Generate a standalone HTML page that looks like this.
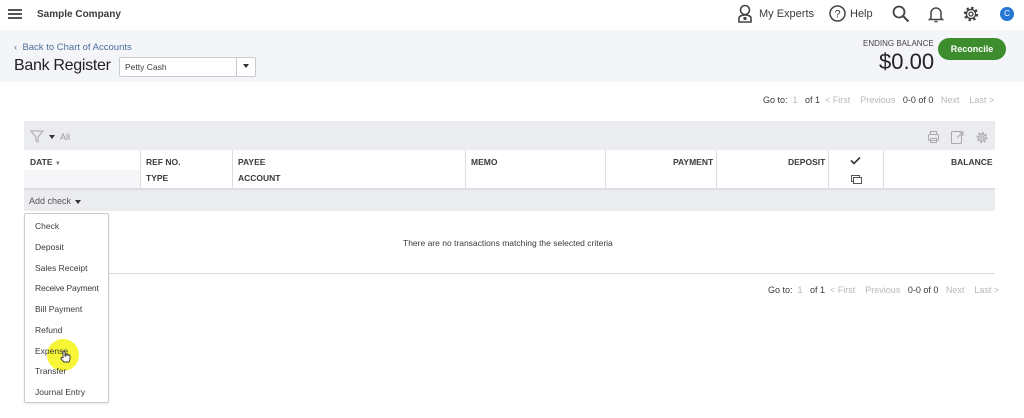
<!DOCTYPE html>
<html><head><meta charset="utf-8"><style>
*{margin:0;padding:0;box-sizing:border-box}
body{width:1024px;height:418px;background:#fff;font-family:"Liberation Sans",sans-serif;color:#393a3d;position:relative;overflow:hidden}
.a{position:absolute;white-space:nowrap}
.hdr{font-size:8.5px;font-weight:bold;color:#393a3d}
.vl{position:absolute;width:1px;background:#dcdde0}
.mi{position:absolute;left:35px;font-size:8.5px;color:#393a3d}
.pg{font-size:9px;color:#393a3d}
.pg span.d{color:#b5b8bd}
</style></head><body>
<div class="a" style="left:8px;top:9px;width:14px;height:2px;background:#555;box-shadow:0 4px 0 #555,0 8px 0 #555"></div>
<div class="a" style="left:37px;top:9px;font-size:10px;font-weight:bold;color:#393a3d">Sample Company</div>
<svg class="a" style="left:737px;top:4px" width="16" height="19" viewBox="0 0 16 19"><circle cx="8" cy="6" r="4.5" fill="none" stroke="#444" stroke-width="1.6"/><path d="M2 18v-4a6 3 0 0 1 12 0v4z" fill="none" stroke="#444" stroke-width="1.6"/><rect x="6.5" y="13" width="3" height="3" fill="#444"/></svg>
<div class="a" style="left:759px;top:8px;font-size:11px">My Experts</div>
<svg class="a" style="left:829px;top:5px" width="17" height="17"><circle cx="8.5" cy="8.5" r="7.5" fill="none" stroke="#444" stroke-width="1.5"/><text x="8.5" y="12.5" font-size="11" text-anchor="middle" fill="#444" font-family="Liberation Sans">?</text></svg>
<div class="a" style="left:850px;top:8px;font-size:11px">Help</div>
<svg class="a" style="left:892px;top:5px" width="18" height="18"><circle cx="7" cy="7" r="5.5" fill="none" stroke="#444" stroke-width="1.8"/><path d="M11 11l5.5 5.5" stroke="#444" stroke-width="2"/></svg>
<svg class="a" style="left:928px;top:5px" width="16" height="18"><path d="M3 13V8a5 5 0 0 1 10 0v5l1.5 1.5h-13z" fill="none" stroke="#444" stroke-width="1.5"/><path d="M6.5 16.5h3" stroke="#444" stroke-width="1.5"/></svg>
<svg class="a" style="left:962px;top:5px" width="18" height="18" viewBox="0 0 18 18"><circle cx="9" cy="9" r="6" fill="none" stroke="#444" stroke-width="2.4" stroke-dasharray="2.4 2.3"/><circle cx="9" cy="9" r="4.6" fill="none" stroke="#444" stroke-width="1.4"/><circle cx="9" cy="9" r="2" fill="none" stroke="#444" stroke-width="1.3"/></svg>
<div class="a" style="left:1000px;top:7px;width:14px;height:14px;border-radius:50%;background:#2577d4;color:#fff;font-size:8px;text-align:center;line-height:14px">C</div>
<div class="a" style="left:0;top:30px;width:1024px;height:52px;background:#f4f5f8"></div>
<div class="a" style="left:14px;top:42px;font-size:9.5px;color:#4b6f9a">&lsaquo;&nbsp; Back to Chart of Accounts</div>
<div class="a" style="left:14px;top:57px;font-size:16px;color:#222;letter-spacing:-0.3px">Bank Register</div>
<div class="a" style="left:119px;top:57px;width:137px;height:20px;border:1px solid #c8cacd;background:#fff;border-radius:2px"></div>
<div class="a" style="left:125px;top:62px;font-size:8.5px">Petty Cash</div>
<div class="a" style="left:236px;top:58px;width:1px;height:18px;background:#c8cacd"></div>
<div class="a" style="left:243px;top:64px;width:0;height:0;border-left:3px solid transparent;border-right:3px solid transparent;border-top:4px solid #333"></div>
<div class="a" style="left:863px;top:39px;font-size:8px;color:#444">ENDING BALANCE</div>
<div class="a" style="left:879px;top:49px;font-size:22px;color:#222">$0.00</div>
<div class="a" style="left:938px;top:38px;width:68px;height:22px;border-radius:11px;background:#3d8d2f;color:#fff;font-size:9px;font-weight:bold;text-align:center;line-height:22px">Reconcile</div>
<div class="a pg" style="left:763px;top:95px">Go to: &nbsp;<span class="d">1</span> &nbsp; of 1 &nbsp;<span class="d">&lt; First &nbsp;&nbsp; Previous</span> &nbsp;&nbsp;0-0 of 0 &nbsp;&nbsp;<span class="d">Next &nbsp;&nbsp; Last &gt;</span></div>
<div class="a" style="left:24px;top:121px;width:971px;height:29px;background:#ebecf0"></div>
<svg class="a" style="left:30px;top:130px" width="14" height="13"><path d="M1 1h12L8 7v5L6 11V7z" fill="none" stroke="#aaa" stroke-width="1"/></svg>
<div class="a" style="left:49px;top:135px;border-left:3px solid transparent;border-right:3px solid transparent;border-top:4px solid #333"></div>
<div class="a" style="left:60px;top:132px;font-size:9px;color:#999">All</div>
<svg class="a" style="left:926px;top:130px" width="64" height="16"><g fill="none" stroke="#aaa" stroke-width="1"><rect x="2.5" y="4.5" width="10" height="6" rx="1"/><rect x="4.5" y="1.5" width="6" height="3"/><rect x="4.5" y="8.5" width="6" height="4"/><rect x="25.5" y="1.5" width="10" height="12" rx="1"/><path d="M31 8l6-6M33 2h4v4"/><circle cx="56" cy="7.5" r="4.5" stroke-dasharray="1.8 1.7" stroke-width="2"/><circle cx="56" cy="7.5" r="3.3"/><circle cx="56" cy="7.5" r="1.5"/></g></svg>
<div class="a" style="left:24px;top:150px;width:116px;height:20px;background:#fff"></div>
<div class="a" style="left:24px;top:170px;width:116px;height:18px;background:#f6f6f8"></div>
<div class="a" style="left:24px;top:188px;width:971px;height:2px;background:#dcdde0"></div>
<div class="vl" style="left:140px;top:150px;height:38px"></div>
<div class="vl" style="left:232px;top:150px;height:38px"></div>
<div class="vl" style="left:465px;top:150px;height:38px"></div>
<div class="vl" style="left:605px;top:150px;height:38px"></div>
<div class="vl" style="left:716px;top:150px;height:38px"></div>
<div class="vl" style="left:828px;top:150px;height:38px"></div>
<div class="vl" style="left:883px;top:150px;height:38px"></div>
<div class="a hdr" style="left:30px;top:157px">DATE <span style="font-size:6px;color:#777">&#9660;</span></div>
<div class="a hdr" style="left:146px;top:157px">REF NO.</div>
<div class="a hdr" style="left:146px;top:173px">TYPE</div>
<div class="a hdr" style="left:238px;top:157px">PAYEE</div>
<div class="a hdr" style="left:238px;top:173px">ACCOUNT</div>
<div class="a hdr" style="left:471px;top:157px">MEMO</div>
<div class="a hdr" style="left:673px;top:157px">PAYMENT</div>
<div class="a hdr" style="left:788px;top:157px">DEPOSIT</div>
<svg class="a" style="left:850px;top:156px" width="11" height="9"><path d="M1 4.5l3 3 6-6" fill="none" stroke="#333" stroke-width="1.6"/></svg>
<svg class="a" style="left:850px;top:174px" width="12" height="10"><rect x="1.5" y="1.5" width="8" height="6" fill="none" stroke="#555"/><rect x="3.5" y="3.5" width="8" height="6" fill="#fff" stroke="#555"/></svg>
<div class="a hdr" style="left:951px;top:157px">BALANCE</div>
<div class="a" style="left:24px;top:190px;width:971px;height:21px;background:#ebecf0"></div>
<div class="a" style="left:29px;top:196px;font-size:9px;color:#555">Add check</div>
<div class="a" style="left:75px;top:200px;border-left:3px solid transparent;border-right:3px solid transparent;border-top:4px solid #333"></div>
<div class="a" style="left:403px;top:238px;font-size:8.5px">There are no transactions matching the selected criteria</div>
<div class="a" style="left:24px;top:273px;width:971px;height:1px;background:#dcdde0"></div>
<div class="a pg" style="left:768px;top:285px">Go to: &nbsp;<span class="d">1</span> &nbsp; of 1 &nbsp;<span class="d">&lt; First &nbsp;&nbsp; Previous</span> &nbsp;&nbsp;0-0 of 0 &nbsp;&nbsp;<span class="d">Next &nbsp;&nbsp; Last &gt;</span></div>
<div class="a" style="left:24px;top:213px;width:85px;height:190px;background:#fff;border:1px solid #ccc;border-radius:2px;box-shadow:0 1px 2px rgba(0,0,0,.1)"></div>
<div class="mi" style="top:221px">Check</div>
<div class="mi" style="top:242px">Deposit</div>
<div class="mi" style="top:263px">Sales Receipt</div>
<div class="mi" style="top:283px;letter-spacing:-0.2px">Receive Payment</div>
<div class="mi" style="top:304px">Bill Payment</div>
<div class="mi" style="top:325px">Refund</div>
<div class="a" style="left:47px;top:339px;width:32px;height:32px;border-radius:50%;background:rgba(245,245,20,.85)"></div>
<div class="mi" style="top:346px">Expense</div>
<svg class="a" style="left:60px;top:350px" width="11" height="13"><path d="M3 7V2a1 1 0 0 1 2 0v4h1V5a1 1 0 0 1 2 0v1a1 1 0 0 1 2 0v3l-1 3H4L1 9a1 1 0 0 1 2-1z" fill="#fff" stroke="#333" stroke-width="0.9"/></svg>
<div class="mi" style="top:366px">Transfer</div>
<div class="mi" style="top:387px">Journal Entry</div>
</body></html>
